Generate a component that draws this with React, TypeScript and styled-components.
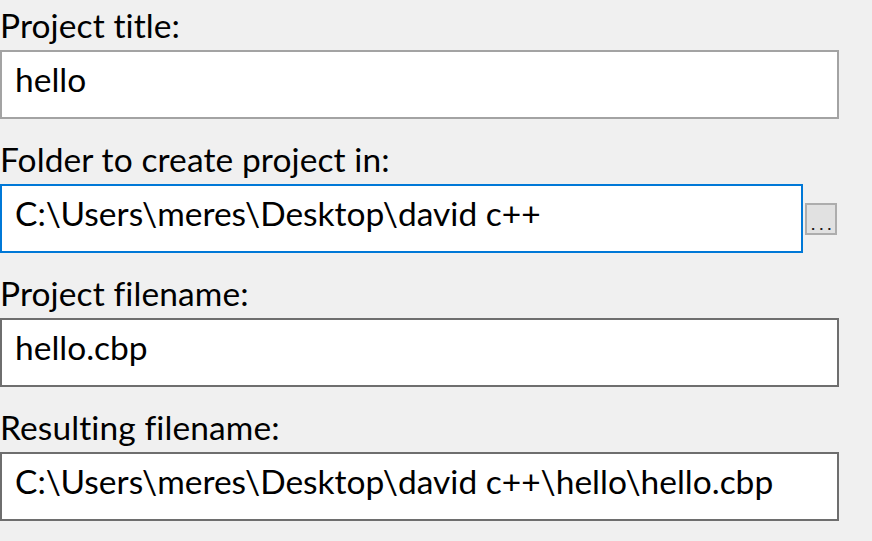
import React from "react";
import styled, { createGlobalStyle } from "styled-components";

const GlobalStyle = createGlobalStyle`
  html, body {
    margin: 0;
    padding: 0;
    background: #f0f0f0;
  }
  body {
    font-family: Lato, "Open Sans", sans-serif;
    font-variant-ligatures: none;
    font-feature-settings: "liga" 0, "dlig" 0;
    color: #000;
  }
`;

const Form = styled.div`
  display: flex;
  flex-direction: column;
  gap: 20px;
  padding-top: 5px;
  width: 872px;
  height: 541px;
  box-sizing: border-box;
  background: #f0f0f0;
`;

const Field = styled.div`
  display: flex;
  flex-direction: column;
  gap: 5px;
`;

const Label = styled.div`
  font-size: 33.5px;
  line-height: 40px;
  height: 40px;
  white-space: nowrap;
  letter-spacing: 0.1px;
`;

const Row = styled.div`
  display: flex;
  align-items: center;
  gap: 2px;
`;

type Tone = "idle" | "focus" | "dark";
const borderFor: Record<Tone, string> = {
  idle: "#a3a3a3",
  focus: "#0078d7",
  dark: "#6e6e6e",
};

const TextBox = styled.div<{ $tone: Tone; $width: number }>`
  box-sizing: border-box;
  width: ${(p) => p.$width}px;
  height: 69px;
  background: #fff;
  border: 2px solid ${(p) => borderFor[p.$tone]};
  padding: 7px 13px 0;
  font-size: 33.5px;
  line-height: 40px;
  white-space: nowrap;
  overflow: hidden;
`;

const BrowseButton = styled.div`
  box-sizing: border-box;
  width: 32px;
  height: 32px;
  background: #e1e1e1;
  border: 2px solid #adadad;
  display: flex;
  align-items: flex-end;
  justify-content: flex-start;
  padding: 0 0 1px 4px;
  font-family: "DejaVu Sans", sans-serif;
  font-weight: bold;
  font-size: 11px;
  line-height: 10px;
  letter-spacing: 4px;
  color: #1a1a1a;
`;

export default function App() {
  return (
    <>
      <GlobalStyle />
      <Form>
        <Field>
          <Label>Project title:</Label>
          <TextBox $tone="idle" $width={839}>hello</TextBox>
        </Field>
        <Field>
          <Label>Folder to create project in:</Label>
          <Row>
            <TextBox $tone="focus" $width={803}>
              C:\Users\meres\Desktop\david c++
            </TextBox>
            <BrowseButton>...</BrowseButton>
          </Row>
        </Field>
        <Field>
          <Label>Project filename:</Label>
          <TextBox $tone="dark" $width={839}>hello.cbp</TextBox>
        </Field>
        <Field>
          <Label>Resulting filename:</Label>
          <TextBox $tone="dark" $width={839}>
            C:\Users\meres\Desktop\david c++\hello\hello.cbp
          </TextBox>
        </Field>
      </Form>
    </>
  );
}
